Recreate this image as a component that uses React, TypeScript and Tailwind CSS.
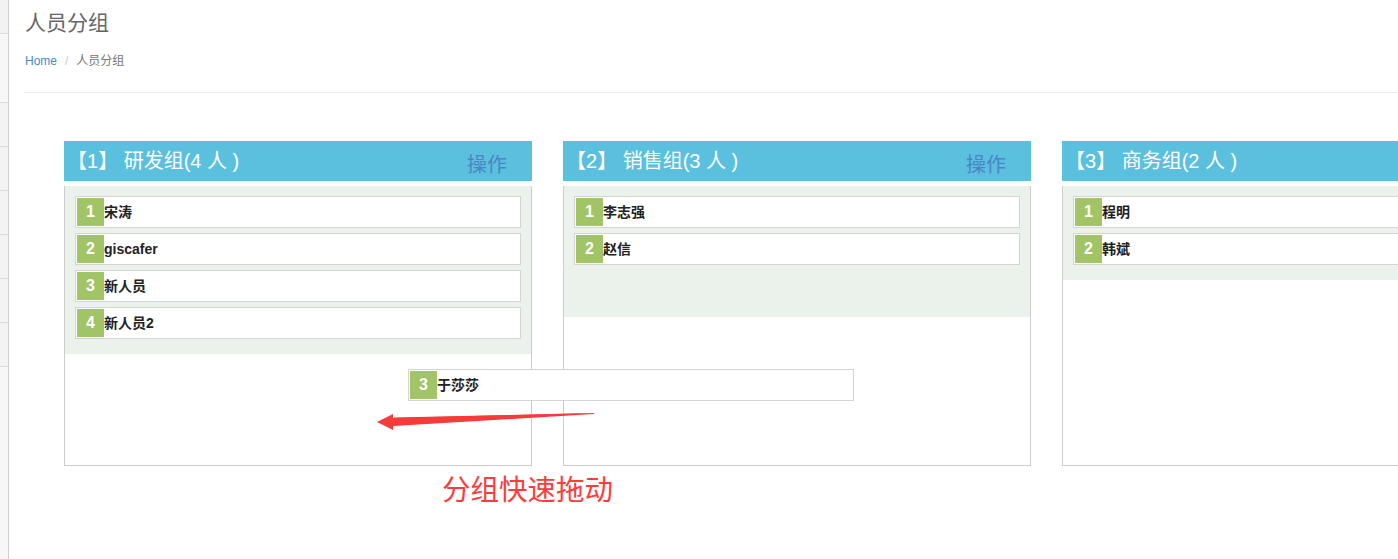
import React from 'react';

interface Member {
  name: string;
}

interface Group {
  id: number;
  title: string;
  members: Member[];
  placeholder?: boolean;
  showOps?: boolean;
}

const groups: Group[] = [
  {
    id: 1,
    title: '研发组(4 人 )',
    members: [{ name: '宋涛' }, { name: 'giscafer' }, { name: '新人员' }, { name: '新人员2' }],
    showOps: true
  },
  {
    id: 2,
    title: '销售组(3 人 )',
    members: [{ name: '李志强' }, { name: '赵信' }],
    placeholder: true, // slot left by the item being dragged
    showOps: true
  },
  {
    id: 3,
    title: '商务组(2 人 )',
    members: [{ name: '程明' }, { name: '韩斌' }]
  }
];

const font = { fontFamily: '"Liberation Sans", Arial, "Noto Sans CJK SC", sans-serif' };

const MemberRow: React.FC<{ index: number; name: string }> = ({ index, name }) => (
  <div className="flex items-center h-[32px] border border-[#d4d4d4] bg-white pl-[1px]">
    <span className="w-[27px] h-[28px] bg-[#a0c466] text-white font-bold text-[16px] flex items-center justify-center shrink-0">
      {index}
    </span>
    <span className="text-[14px] font-bold text-[#222]">{name}</span>
  </div>
);

const GroupPanel: React.FC<{ group: Group }> = ({ group }) => (
  <div className="w-[468px] shrink-0">
    {/* header */}
    <div className="h-[40px] bg-[#5bc0de] flex items-center justify-between pl-[3px] pr-[25px]">
      <span className="text-white text-[20px]">
        【{group.id}】 {group.title}
      </span>
      {group.showOps && <span className="text-[#4a86c4] text-[20px] mt-[7px]">操作</span>}
    </div>
    {/* sortable body */}
    <div className="mt-[5px] h-[280px] border border-t-0 border-[#cccccc]">
      <div className="bg-[#ebf1eb] px-[10px] pt-[10px] pb-[10px] flex flex-col gap-[5px]">
        {group.members.map((m, i) => (
          <MemberRow key={m.name} index={i + 1} name={m.name} />
        ))}
        {group.placeholder && <div className="h-[32px]" />}
        <div className="h-0" />
      </div>
    </div>
  </div>
);

export default function App() {
  return (
    <div className="relative w-[1398px] h-[559px] overflow-hidden bg-white flex" style={font}>
      {/* left sidebar strip */}
      <div className="w-[9px] h-full shrink-0 bg-[#f7f7f7] border-r border-[#cfcfcf] flex flex-col">
        <div className="h-[34px] bg-[#f2f2f2] border-b border-[#dcdcdc]" />
        <div className="h-[69px] border-b border-[#dcdcdc]" />
        {[0, 1, 2, 3, 4, 5].map((i) => (
          <div key={i} className="h-[44px] bg-[#f3f3f3] border-b border-[#dcdcdc]" />
        ))}
      </div>

      {/* main */}
      <div className="flex-1 min-w-0 pl-[16px]">
        <div className="pt-[10px] text-[21px] leading-[26px] text-[#666]">人员分组</div>
        <div className="mt-[16px] text-[12px] leading-[18px] flex items-center">
          <span className="text-[#428bca]">Home</span>
          <span className="text-[#ccc] px-[8px]">/</span>
          <span className="text-[#777]">人员分组</span>
        </div>
        <div className="mt-[22px] -ml-[1px] border-t border-[#eeeeee]" />

        <div className="mt-[48px] ml-[39px] flex gap-[31px]">
          {groups.map((g) => (
            <GroupPanel key={g.id} group={g} />
          ))}
        </div>
      </div>

      {/* dragged item */}
      <div className="absolute left-[408px] top-[369px] w-[446px]">
        <MemberRow index={3} name="于莎莎" />
      </div>

      {/* red arrow annotation */}
      <svg className="absolute left-0 top-0 pointer-events-none" width="1398" height="559">
        <polygon points="594,413 393,418 393,430 377,422 393,414 393,418 393,426 594,414" fill="#f63b3b" />
        <polygon points="594,413 394,417.5 394,425.5" fill="#f63b3b" />
      </svg>

      <div className="absolute left-[442px] top-[472px] text-[28.5px] leading-[36px] text-[#ff3b3b]">
        分组快速拖动
      </div>
    </div>
  );
}
